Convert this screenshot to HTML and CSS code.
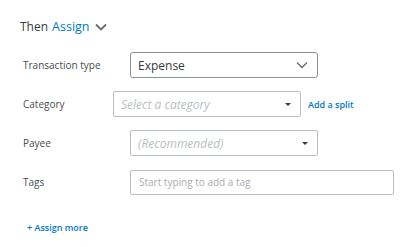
FILE: index.html
```html
<!DOCTYPE html>
<html lang="en">
	<head>
		<meta charset="utf-8">
		<title>Rule</title>
		<link rel="stylesheet" href="styles.css">
	</head>
	<body>
		<div class="then">
			<span class="then-label">Then</span>
			<span class="assign">Assign</span>
			<svg class="chevron" width="12" height="8" viewBox="0 0 12 8"><path d="M1 1.5 L6 6.5 L11 1.5" fill="none" stroke="#6b6c72" stroke-width="1.8"/></svg>
		</div>
		<div class="form">
			<div class="row">
				<div class="label">Transaction type</div>
				<div class="select strong">
					<span class="value">Expense</span>
					<svg class="chevron" width="12" height="8" viewBox="0 0 12 8"><path d="M1 1.5 L6 6.5 L11 1.5" fill="none" stroke="#6b6c72" stroke-width="1.4"/></svg>
				</div>
			</div>
			<div class="row">
				<div class="label">Category</div>
				<div class="select combo shifted">
					<span class="placeholder italic">Select a category</span>
					<span class="caret"></span>
				</div>
				<a class="link split">Add a split</a>
			</div>
			<div class="row">
				<div class="label">Payee</div>
				<div class="select combo">
					<span class="placeholder italic">(Recommended)</span>
					<span class="caret"></span>
				</div>
			</div>
			<div class="row">
				<div class="label">Tags</div>
				<div class="select tags">
					<span class="placeholder small">Start typing to add a tag</span>
				</div>
			</div>
		</div>
		<a class="link more">+ Assign more</a>
	</body>
</html>
```

FILE: styles.css
```css
body {
	margin: 0;
	padding: 18px 0 0 20px;
	background: #ffffff;
	font-family: 'Open Sans', sans-serif;
	color: #393a3d;
	width: 403px;
	height: 247px;
	box-sizing: border-box;
	overflow: hidden;
}

.then {
	display: flex;
	align-items: center;
	height: 17px;
	font-size: 12px;
}

.then-label {
	color: #393a3d;
}

.assign {
	color: #0077c5;
	margin-left: 4px;
	font-size: 12.5px;
}

.then .chevron {
	margin-left: 5px;
}

.form {
	display: flex;
	flex-direction: column;
	gap: 13px;
	margin-top: 17px;
	padding-left: 3px;
}

.row {
	display: flex;
	align-items: center;
	height: 26px;
}

.label {
	width: 107px;
	font-size: 10px;
	color: #4a4b4f;
}

.select {
	box-sizing: border-box;
	height: 26px;
	width: 188px;
	border: 1px solid #babec5;
	border-radius: 2px;
	display: flex;
	align-items: center;
	justify-content: space-between;
	padding: 0 9px 0 7px;
}

.select.strong {
	border-color: #8d9096;
	border-radius: 3px;
}

.select.shifted {
	margin-left: -17px;
}

.select.tags {
	width: 264px;
	height: 25px;
}

.value {
	font-size: 12px;
	color: #393a3d;
}

.placeholder {
	color: #babec5;
	font-size: 12px;
}

.placeholder.italic {
	font-style: italic;
}

.placeholder.small {
	font-size: 10px;
	color: #a8acb3;
	padding-left: 1px;
}

.caret {
	width: 0;
	height: 0;
	border-left: 3px solid transparent;
	border-right: 3px solid transparent;
	border-top: 3px solid #393a3d;
}

.link {
	color: #0077c5;
	font-size: 9px;
	font-weight: 600;
	cursor: pointer;
}

.split {
	margin-left: 7px;
}

.more {
	display: block;
	margin: 26px 0 0 7px;
}
```
